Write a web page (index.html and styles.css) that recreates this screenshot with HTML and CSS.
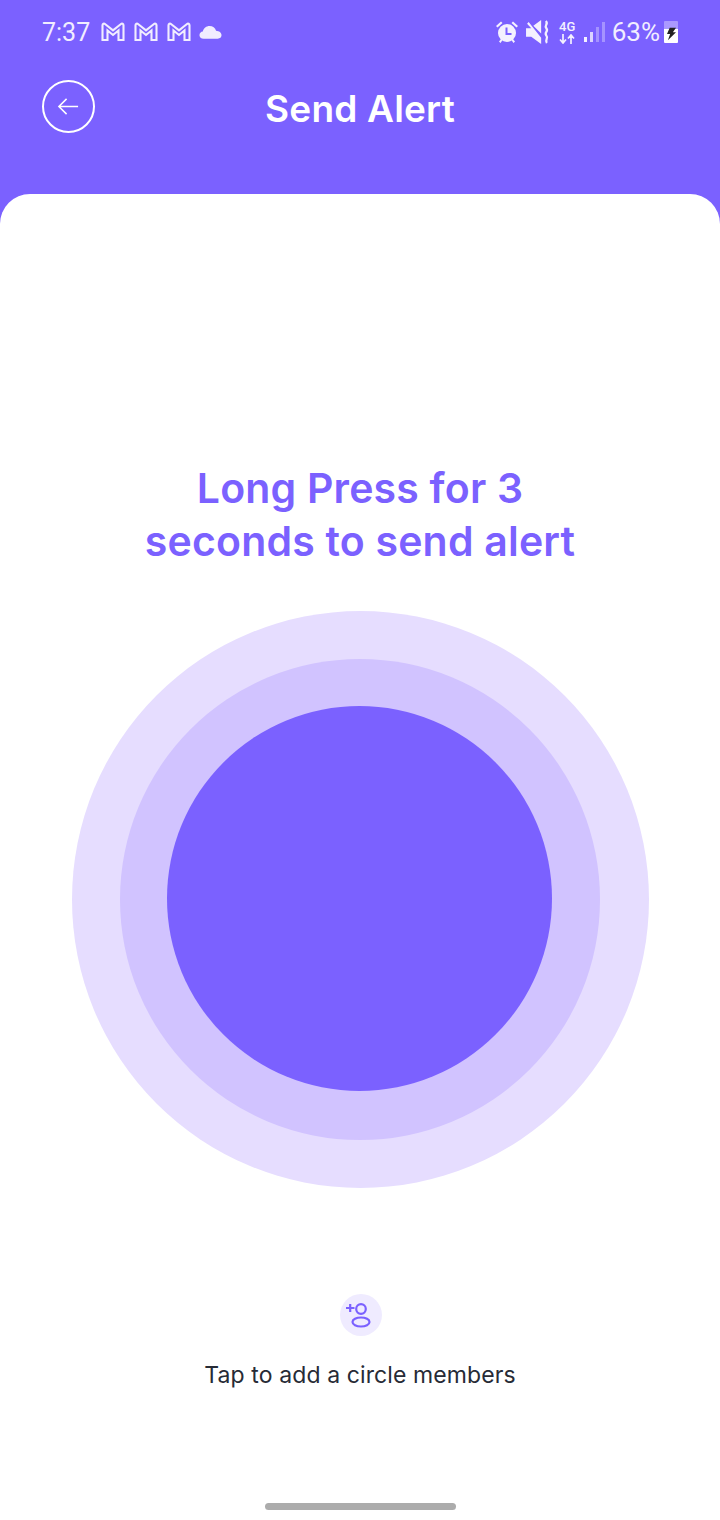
FILE: index.html
```html
<!DOCTYPE html>
<html lang="en">
<head>
    <meta charset="UTF-8">
    <meta name="viewport" content="width=device-width, initial-scale=1.0">
    <title>Send Alert</title>
    <link rel="stylesheet" href="styles.css">
</head>
<body>
    <header class="top">
        <div class="status">
            <div class="status-left">
                <span class="clock">7:37</span>
                <svg class="gmail" viewBox="0 0 24 20"><path d="M1.500 18V3.200C1.500 1.800 3 1.200 4 2l8 6.400L20 2c1-.8 2.500-.2 2.500 1.200V18H17.500V8.500L12 13 6.500 8.500V18z"/></svg>
                <svg class="gmail" viewBox="0 0 24 20"><path d="M1.500 18V3.200C1.500 1.800 3 1.200 4 2l8 6.400L20 2c1-.8 2.500-.2 2.500 1.200V18H17.500V8.500L12 13 6.500 8.500V18z"/></svg>
                <svg class="gmail" viewBox="0 0 24 20"><path d="M1.500 18V3.200C1.500 1.800 3 1.200 4 2l8 6.400L20 2c1-.8 2.500-.2 2.500 1.200V18H17.500V8.500L12 13 6.500 8.500V18z"/></svg>
                <svg class="cloud" viewBox="0 0 24 14"><path d="M5 14C2 14 .5 12.300 .5 10.300 .5 8.300 2 6.800 4 6.600 4.800 3 7.700 .8 11 .8c3.300 0 6 2 6.800 5C21 6 23.500 7.800 23.500 10.500 23.500 12.500 22 14 19.500 14z"/></svg>
            </div>
            <div class="status-right">
                <svg class="alarm" viewBox="0 0 24 24"><circle cx="12" cy="13" r="9"/><path d="M1 6l5-4.500 1.500 1.500-5 4.500zM23 6l-5-4.500-1.500 1.500 5 4.500zM4 21.500l2.500-3 1.500 1-2.500 3.500zM20 21.500l-2.500-3-1.500 1 2.500 3.500z"/><path class="alarm-hand" d="M11.500 7.500v6.500h5"/></svg>
                <svg class="mute" viewBox="0 0 24 24"><path d="M1 8h5L2 3.500 3.500 2l12 15v6L6 16H1zM8 5.500L15.500 0v13z"/><path class="mute-wave" d="M20 1c3 3-2 4 .5 7s-2.500 4 0 7-2 4 .5 7"/></svg>
                <div class="net">
                    <span class="net-label">4G</span>
                    <svg class="net-arrows" viewBox="0 0 16 10"><path d="M4 0v8M1 5.500L4 9l3-3.500M12 10V2M9 4.500L12 1l3 3.500"/></svg>
                </div>
                <div class="signal">
                    <span class="bar bar-1"></span>
                    <span class="bar bar-2"></span>
                    <span class="bar bar-3"></span>
                    <span class="bar bar-4"></span>
                </div>
                <span class="battery-text">63%</span>
                <div class="battery">
                    <svg class="bolt" viewBox="0 0 10 14"><path d="M3 0h7L6.500 5H10L1 14l2.500-7H0z"/></svg>
                </div>
            </div>
        </div>
        <div class="titlebar">
            <a class="back" href="#">
                <svg viewBox="0 0 24 24"><path d="M22 12H2M10 4l-8 8 8 8"/></svg>
            </a>
            <h1>Send Alert</h1>
        </div>
    </header>

    <main class="sheet">
        <h2>Long Press for 3<br>seconds to send alert</h2>
        <button class="ring ring-outer" type="button">
            <span class="ring ring-middle">
                <span class="ring ring-inner"></span>
            </span>
        </button>
        <div class="add-member">
            <span class="add-icon">
                <svg viewBox="0 0 42 42"><path d="M6 14h8.500M10.200 10v8"/><circle cx="21" cy="15" r="4.800"/><ellipse cx="21" cy="28" rx="8.500" ry="4.500"/></svg>
            </span>
            <p>Tap to add a circle members</p>
        </div>
        <div class="home-bar"></div>
    </main>
</body>
</html>
```

FILE: styles.css
```css
* {
    box-sizing: border-box;
}
body {
    margin: 0;
    height: 1520px;
    overflow: hidden;
    display: flex;
    flex-direction: column;
    background-color: #7b61ff;
    font-family: 'Inter', sans-serif;
}
.top {
    height: 194px;
    flex-shrink: 0;
    color: #fff;
}
.status {
    height: 54px;
    padding: 10px 42px 0 42px;
    display: flex;
    justify-content: space-between;
    align-items: center;
}
.status-left, .status-right {
    display: flex;
    align-items: center;
}
.clock {
    font-family: 'Roboto', sans-serif;
    font-size: 25px;
    color: #f1edff;
    margin-right: 11px;
}
.gmail {
    width: 24px;
    height: 20px;
    margin-right: 9px;
    fill: none;
    stroke: #f1edff;
    stroke-width: 2.1;
}
.cloud {
    width: 23px;
    height: 14px;
    margin-left: -1px;
    fill: #f1edff;
}
.alarm {
    width: 24px;
    height: 24px;
    fill: #f4f1ff;
    margin-right: 6px;
}
.alarm-hand {
    fill: none;
    stroke: #7b61ff;
    stroke-width: 2;
}
.mute {
    width: 25px;
    height: 25px;
    fill: #f4f1ff;
    margin-right: 9px;
}
.mute-wave {
    fill: none;
    stroke: #f4f1ff;
    stroke-width: 2.2;
}
.net {
    width: 17px;
    display: flex;
    flex-direction: column;
    align-items: center;
    margin-right: 8px;
}
.net-label {
    font-family: 'Roboto', sans-serif;
    font-size: 13px;
    font-weight: 500;
    line-height: 14px;
    color: #f4f1ff;
}
.net-arrows {
    width: 16px;
    height: 10px;
    fill: none;
    stroke: #f4f1ff;
    stroke-width: 1.7;
}
.signal {
    height: 20px;
    display: flex;
    align-items: flex-end;
    gap: 3px;
    margin-right: 7px;
}
.bar {
    width: 3px;
    background: #f4f1ff;
}
.bar-1 { height: 5px; }
.bar-2 { height: 10px; opacity: 0.8; }
.bar-3 { height: 15px; opacity: 0.35; }
.bar-4 { height: 20px; opacity: 0.35; }
.battery-text {
    font-family: 'Roboto', sans-serif;
    font-size: 26px;
    color: #f1edff;
    margin-right: 4px;
}
.battery {
    position: relative;
    width: 14px;
    height: 22px;
    border-radius: 1px;
    background: linear-gradient(#ab99ff 35%, #fff 35%);
}
.bolt {
    position: absolute;
    left: 3px;
    top: 6px;
    width: 9px;
    height: 14px;
    fill: #222;
}
.titlebar {
    position: relative;
    height: 100px;
    display: flex;
    justify-content: center;
    align-items: center;
    padding-top: 9px;
}
.titlebar h1 {
    margin: 0;
    font-size: 37px;
    font-weight: 600;
    letter-spacing: 0.2px;
    line-height: 1;
    color: #fff;
}
.back {
    position: absolute;
    left: 42px;
    top: 26px;
    width: 53px;
    height: 53px;
    border: 2px solid #fff;
    border-radius: 50%;
    display: flex;
    justify-content: center;
    align-items: center;
}
.back svg {
    width: 23px;
    height: 23px;
    fill: none;
    stroke: #fff;
    stroke-width: 1.6;
}
.sheet {
    flex: 1;
    background: #fff;
    border-radius: 30px 30px 0 0;
    display: flex;
    flex-direction: column;
    align-items: center;
    padding-top: 268px;
}
.sheet h2 {
    margin: 0;
    color: #7b61ff;
    font-size: 41px;
    font-weight: 600;
    letter-spacing: 0.2px;
    line-height: 53px;
    text-align: center;
}
.ring {
    display: flex;
    justify-content: center;
    align-items: center;
    border: 0;
    padding: 0;
    border-radius: 50%;
}
.ring-outer {
    width: 577px;
    height: 577px;
    margin-top: 43px;
    background: #e6ddff;
}
.ring-middle {
    width: 480px;
    height: 481px;
    background: #d1c3ff;
}
.ring-inner {
    width: 385px;
    height: 385px;
    margin: 0 0 2px -1px;
    background: #7b61ff;
}
.add-member {
    margin-top: 106px;
    display: flex;
    flex-direction: column;
    align-items: center;
}
.add-icon {
    width: 42px;
    height: 42px;
    margin-left: 2px;
    border-radius: 50%;
    background: #efebff;
}
.add-icon svg {
    display: block;
    width: 42px;
    height: 42px;
    fill: none;
    stroke: #7b61ff;
    stroke-width: 2.2;
}
.add-member p {
    margin: 24px 0 0;
    font-size: 23px;
    letter-spacing: 0.1px;
    line-height: 30px;
    color: #272b36;
}
.home-bar {
    width: 191px;
    height: 7px;
    margin-top: 113px;
    border-radius: 4px;
    background: #acacac;
}
```
